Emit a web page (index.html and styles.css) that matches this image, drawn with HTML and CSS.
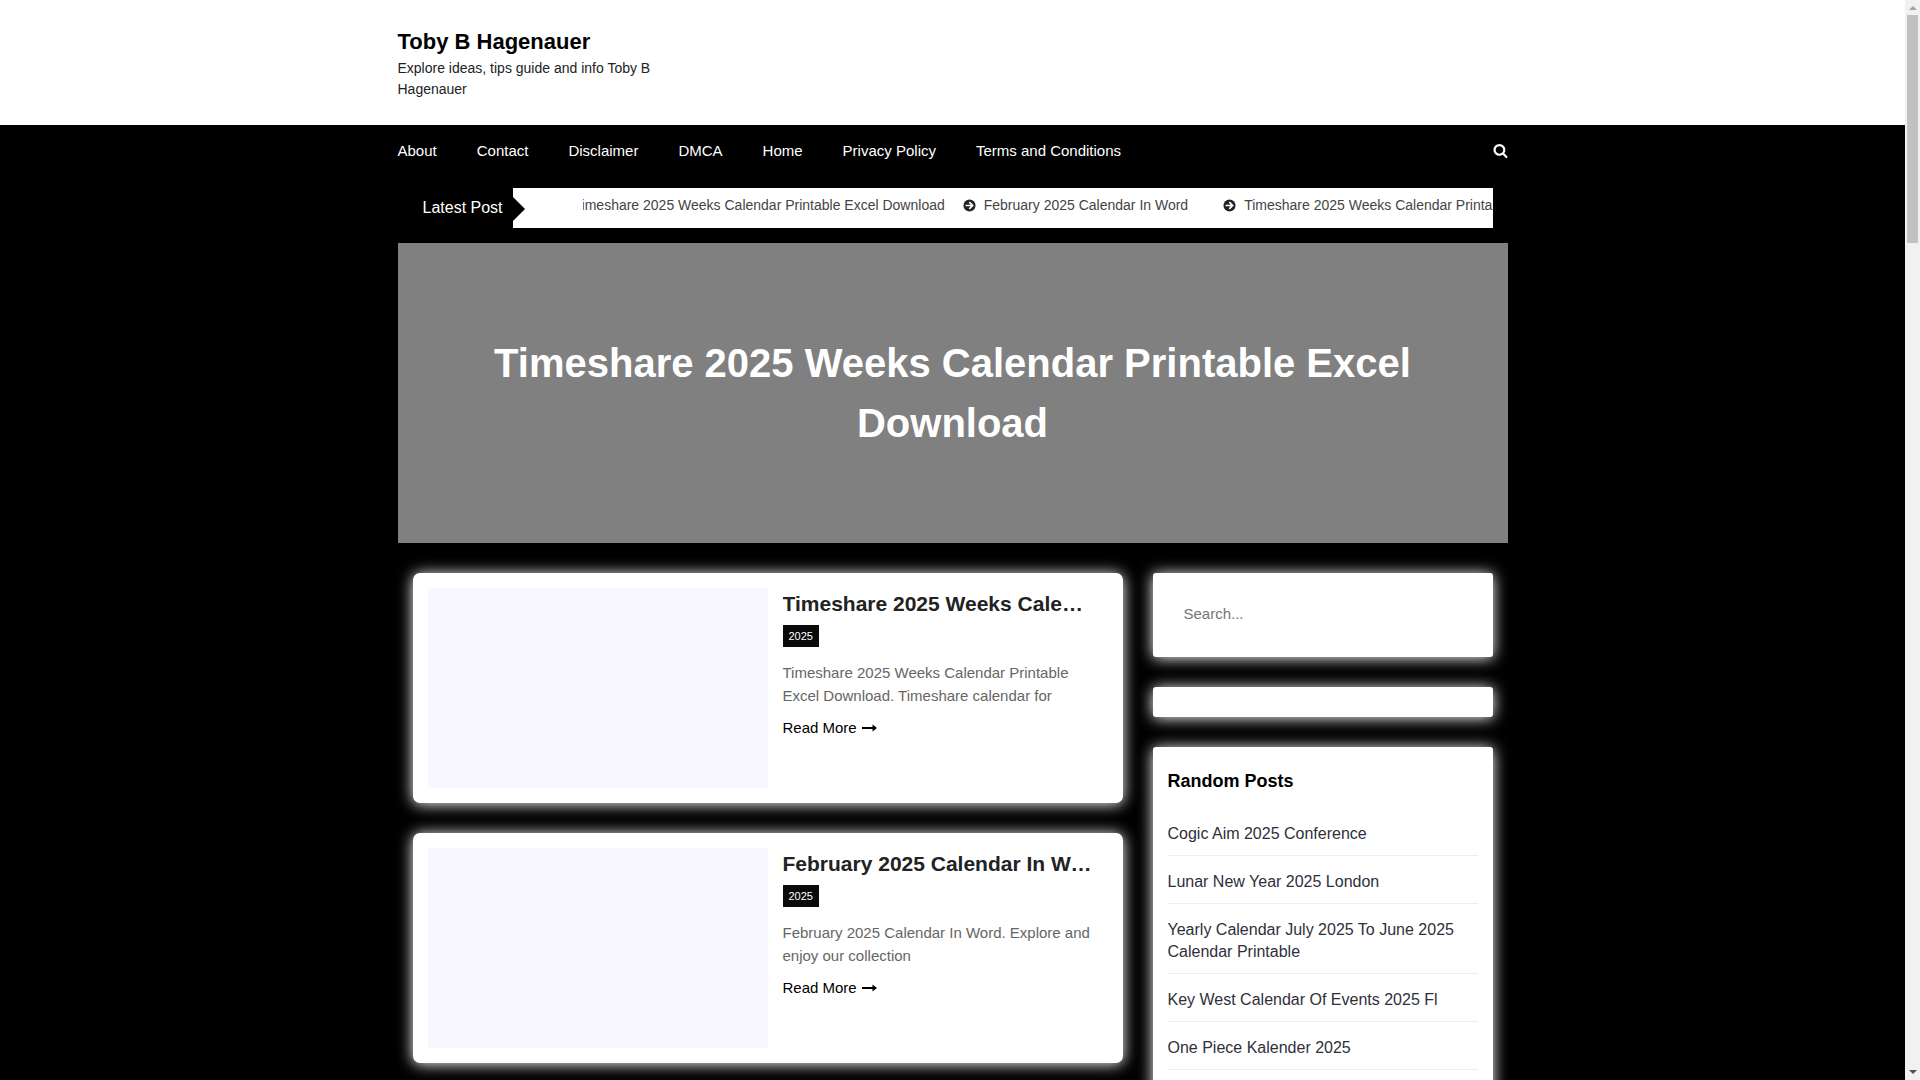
FILE: index.html
```html
<!DOCTYPE html>
<html lang="en">
<head>
  <meta charset="UTF-8">
  <meta name="viewport" content="width=device-width, initial-scale=1">
  <title>Toby B Hagenauer</title>
  <link rel="stylesheet" href="styles.css">
</head>
<body>
  <svg class="sprite" aria-hidden="true">
    <symbol id="icon-search" viewBox="0 0 1664 1664">
      <path fill="currentColor" d="M1152 704q0-185-131.500-316.500T704 256 387.500 387.500 256 704t131.500 316.500T704 1152t316.500-131.500T1152 704zm512 832q0 52-38 90t-90 38q-54 0-90-38l-343-342q-179 124-399 124-143 0-273.500-55.500t-225-150-150-225T0 704t55.500-273.500 150-225 225-150T704 0t273.500 55.500 225 150 150 225T1408 704q0 220-124 399l343 343q37 37 37 90z"/>
    </symbol>
    <symbol id="icon-circle-arrow" viewBox="0 0 14 14">
      <circle cx="7" cy="7" r="6.500" fill="currentColor"/>
      <path d="M2.800 7H10M6.800 3.400L10.400 7l-3.600 3.600" fill="none" stroke="#fff" stroke-width="1.800"/>
    </symbol>
    <symbol id="icon-long-arrow" viewBox="0 0 15 8">
      <path fill="currentColor" d="M0 3h10.500V.5L15 4l-4.500 3.500V5H0z"/>
    </symbol>
  </svg>

  <div class="page">
    <header class="site-header">
      <div class="container">
        <div class="branding">
          <h1 class="site-title"><a href="#">Toby B Hagenauer</a></h1>
          <p class="site-description">Explore ideas, tips guide and info Toby B Hagenauer</p>
        </div>
      </div>
    </header>

    <div class="container main-nav">
      <nav>
        <ul class="menu">
          <li><a href="#">About</a></li>
          <li><a href="#">Contact</a></li>
          <li><a href="#">Disclaimer</a></li>
          <li><a href="#">DMCA</a></li>
          <li><a href="#">Home</a></li>
          <li><a href="#">Privacy Policy</a></li>
          <li><a href="#">Terms and Conditions</a></li>
        </ul>
      </nav>
      <button class="search-toggle" type="button" aria-label="Open search">
        <svg><use href="#icon-search"/></svg>
      </button>
    </div>

    <div class="container">
      <div class="ticker">
        <div class="ticker-label">Latest Post</div>
        <div class="ticker-body">
          <div class="ticker-track">
            <ul class="ticker-group">
              <li><a href="#"><svg><use href="#icon-circle-arrow"/></svg>Timeshare 2025 Weeks Calendar Printable Excel Download</a></li>
              <li><a href="#"><svg><use href="#icon-circle-arrow"/></svg>February 2025 Calendar In Word</a></li>
            </ul>
            <ul class="ticker-group">
              <li><a href="#"><svg><use href="#icon-circle-arrow"/></svg>Timeshare 2025 Weeks Calendar Printable Excel Download</a></li>
            </ul>
          </div>
        </div>
      </div>

      <section class="hero">
        <h2><a href="#">Timeshare 2025 Weeks Calendar Printable Excel Download</a></h2>
      </section>

      <div class="content">
        <main class="posts">
          <article class="post">
            <a class="post-thumb" href="#" aria-label="Timeshare 2025 Weeks Calendar Printable Excel Download"></a>
            <div class="post-body">
              <h2 class="post-title"><a href="#">Timeshare 2025 Weeks Calendar Printable Excel Download</a></h2>
              <a class="category" href="#">2025</a>
              <p class="excerpt">Timeshare 2025 Weeks Calendar Printable Excel Download. Timeshare calendar for</p>
              <a class="read-more" href="#">Read More <svg><use href="#icon-long-arrow"/></svg></a>
            </div>
          </article>
          <article class="post">
            <a class="post-thumb" href="#" aria-label="February 2025 Calendar In Word"></a>
            <div class="post-body">
              <h2 class="post-title"><a href="#">February 2025 Calendar In Word</a></h2>
              <a class="category" href="#">2025</a>
              <p class="excerpt">February 2025 Calendar In Word. Explore and enjoy our collection</p>
              <a class="read-more" href="#">Read More <svg><use href="#icon-long-arrow"/></svg></a>
            </div>
          </article>
        </main>

        <aside class="sidebar">
          <form class="widget">
            <input class="search-field" type="search" placeholder="Search..." aria-label="Search">
          </form>
          <div class="widget"></div>
          <section class="widget">
            <h2 class="widget-title">Random Posts</h2>
            <ul class="post-list">
              <li><a href="#">Cogic Aim 2025 Conference</a></li>
              <li><a href="#">Lunar New Year 2025 London</a></li>
              <li><a href="#">Yearly Calendar July 2025 To June 2025 Calendar Printable</a></li>
              <li><a href="#">Key West Calendar Of Events 2025 Fl</a></li>
              <li><a href="#">One Piece Kalender 2025</a></li>
            </ul>
          </section>
        </aside>
      </div>
    </div>
  </div>

  <div class="scrollbar" aria-hidden="true">
    <span class="arrow-up"></span>
    <span class="thumb"></span>
    <span class="arrow-down"></span>
  </div>
</body>
</html>
```

FILE: styles.css
```css
* {
  box-sizing: border-box;
}

body {
  margin: 0;
  display: flex;
  height: 100vh;
  overflow: hidden;
  background: #000;
  color: #222;
  font-family: "Liberation Sans", Arial, sans-serif;
  font-size: 15px;
  line-height: 23px;
}

h1, h2, p, ul {
  margin: 0;
  padding: 0;
}

ul {
  list-style: none;
}

a {
  color: inherit;
  text-decoration: none;
}

.sprite {
  position: absolute;
  width: 0;
  height: 0;
}

.page {
  flex: 1;
  min-width: 0;
  overflow: hidden;
}

.container {
  max-width: 1110px;
  margin: 0 auto;
}

/* Header */
.site-header {
  background: #fff;
  padding: 25px 0;
}

.branding {
  width: 25%;
}

.site-title {
  font-size: 22px;
  line-height: 33px;
  color: #000;
}

.site-description {
  font-size: 14px;
  line-height: 21px;
}

/* Navigation */
.main-nav {
  display: flex;
  justify-content: space-between;
  align-items: center;
  height: 51px;
  color: #fff;
}

.menu {
  display: flex;
  gap: 40px;
}

.search-toggle {
  display: flex;
  padding: 0;
  border: 0;
  background: none;
  color: #fff;
  cursor: pointer;
}

.search-toggle svg {
  width: 15px;
  height: 14px;
}

/* Latest post ticker */
.ticker {
  display: flex;
  height: 40px;
  margin: 12px 15px 15px;
}

.ticker-label {
  position: relative;
  padding: 8px 10px;
  color: #fff;
  font-size: 16px;
}

.ticker-label::after {
  content: "";
  position: absolute;
  top: 9px;
  left: 100%;
  border: 12px solid transparent;
  border-left-color: #000;
  border-right-width: 0;
}

.ticker-body {
  flex: 1;
  min-width: 0;
  padding-left: 70px;
  background: #fff;
}

.ticker-track {
  display: flex;
  gap: 35px;
  overflow: hidden;
  color: #444;
  font-size: 14px;
  line-height: 34px;
  white-space: nowrap;
}

.ticker-group {
  display: flex;
  flex-shrink: 0;
  gap: 18px;
}

.ticker-group:first-child {
  margin-left: -30px;
}

.ticker-group a {
  display: flex;
  align-items: center;
  gap: 8px;
}

.ticker-group svg {
  width: 13px;
  height: 13px;
  color: #222;
}

/* Hero */
.hero {
  display: flex;
  align-items: center;
  justify-content: center;
  min-height: 300px;
  padding: 0 80px;
  background: #808080;
  color: #fff;
  text-align: center;
}

.hero h2 {
  font-size: 40px;
  line-height: 60px;
}

/* Content */
.content {
  display: grid;
  grid-template-columns: 710fr 340fr;
  gap: 30px;
  padding: 30px 15px;
}

.posts,
.sidebar {
  display: flex;
  flex-direction: column;
  gap: 30px;
  min-width: 0;
}

.post,
.widget {
  padding: 15px;
  background: #fff;
  box-shadow: 0 1px 15px #fff;
}

.post {
  display: grid;
  grid-template-columns: 1fr 1fr;
  border-radius: 7px;
}

.post-thumb {
  height: 200px;
  background: #f8f7ff;
}

.post-body {
  min-width: 0;
  padding: 0 15px;
}

.post-title {
  overflow: hidden;
  margin-bottom: 6px;
  font-size: 21px;
  line-height: 31px;
  white-space: nowrap;
  text-overflow: ellipsis;
}

.category {
  display: block;
  width: fit-content;
  padding: 0 6px;
  background: #0a0a0a;
  color: #fff;
  font-size: 11px;
  line-height: 22px;
}

.excerpt {
  margin: 14px 0 9px;
  color: #666;
}

.read-more {
  color: #000;
}

.read-more svg {
  width: 15px;
  height: 8px;
  margin-left: 1px;
  vertical-align: 1px;
}

/* Sidebar */
.widget {
  border-radius: 3px;
}

.search-field {
  display: block;
  width: 100%;
  height: 50px;
  margin-bottom: 4px;
  padding: 0 16px;
  border: 0;
  background: none;
  font: inherit;
}

.search-field::placeholder {
  color: #757575;
}

.widget-title {
  margin-bottom: 23px;
  color: #000;
  font-size: 18px;
  line-height: 38px;
}

.post-list li {
  margin-bottom: 15px;
  padding-bottom: 10px;
  border-bottom: 1px solid #eee;
  color: #2f2f3b;
  font-size: 16px;
  line-height: 22px;
}

/* Scrollbar column */
.scrollbar {
  display: flex;
  flex-direction: column;
  align-items: center;
  width: 15px;
  background: #f1f1f1;
}

.arrow-up,
.arrow-down {
  border: 4px solid transparent;
}

.arrow-up {
  margin: 2px 0 5px;
  border-bottom-color: #a3a3a3;
}

.arrow-down {
  margin: auto 0 2px;
  border-top-color: #505050;
}

.thumb {
  width: 11px;
  height: 228px;
  background: #c1c1c1;
}
```
